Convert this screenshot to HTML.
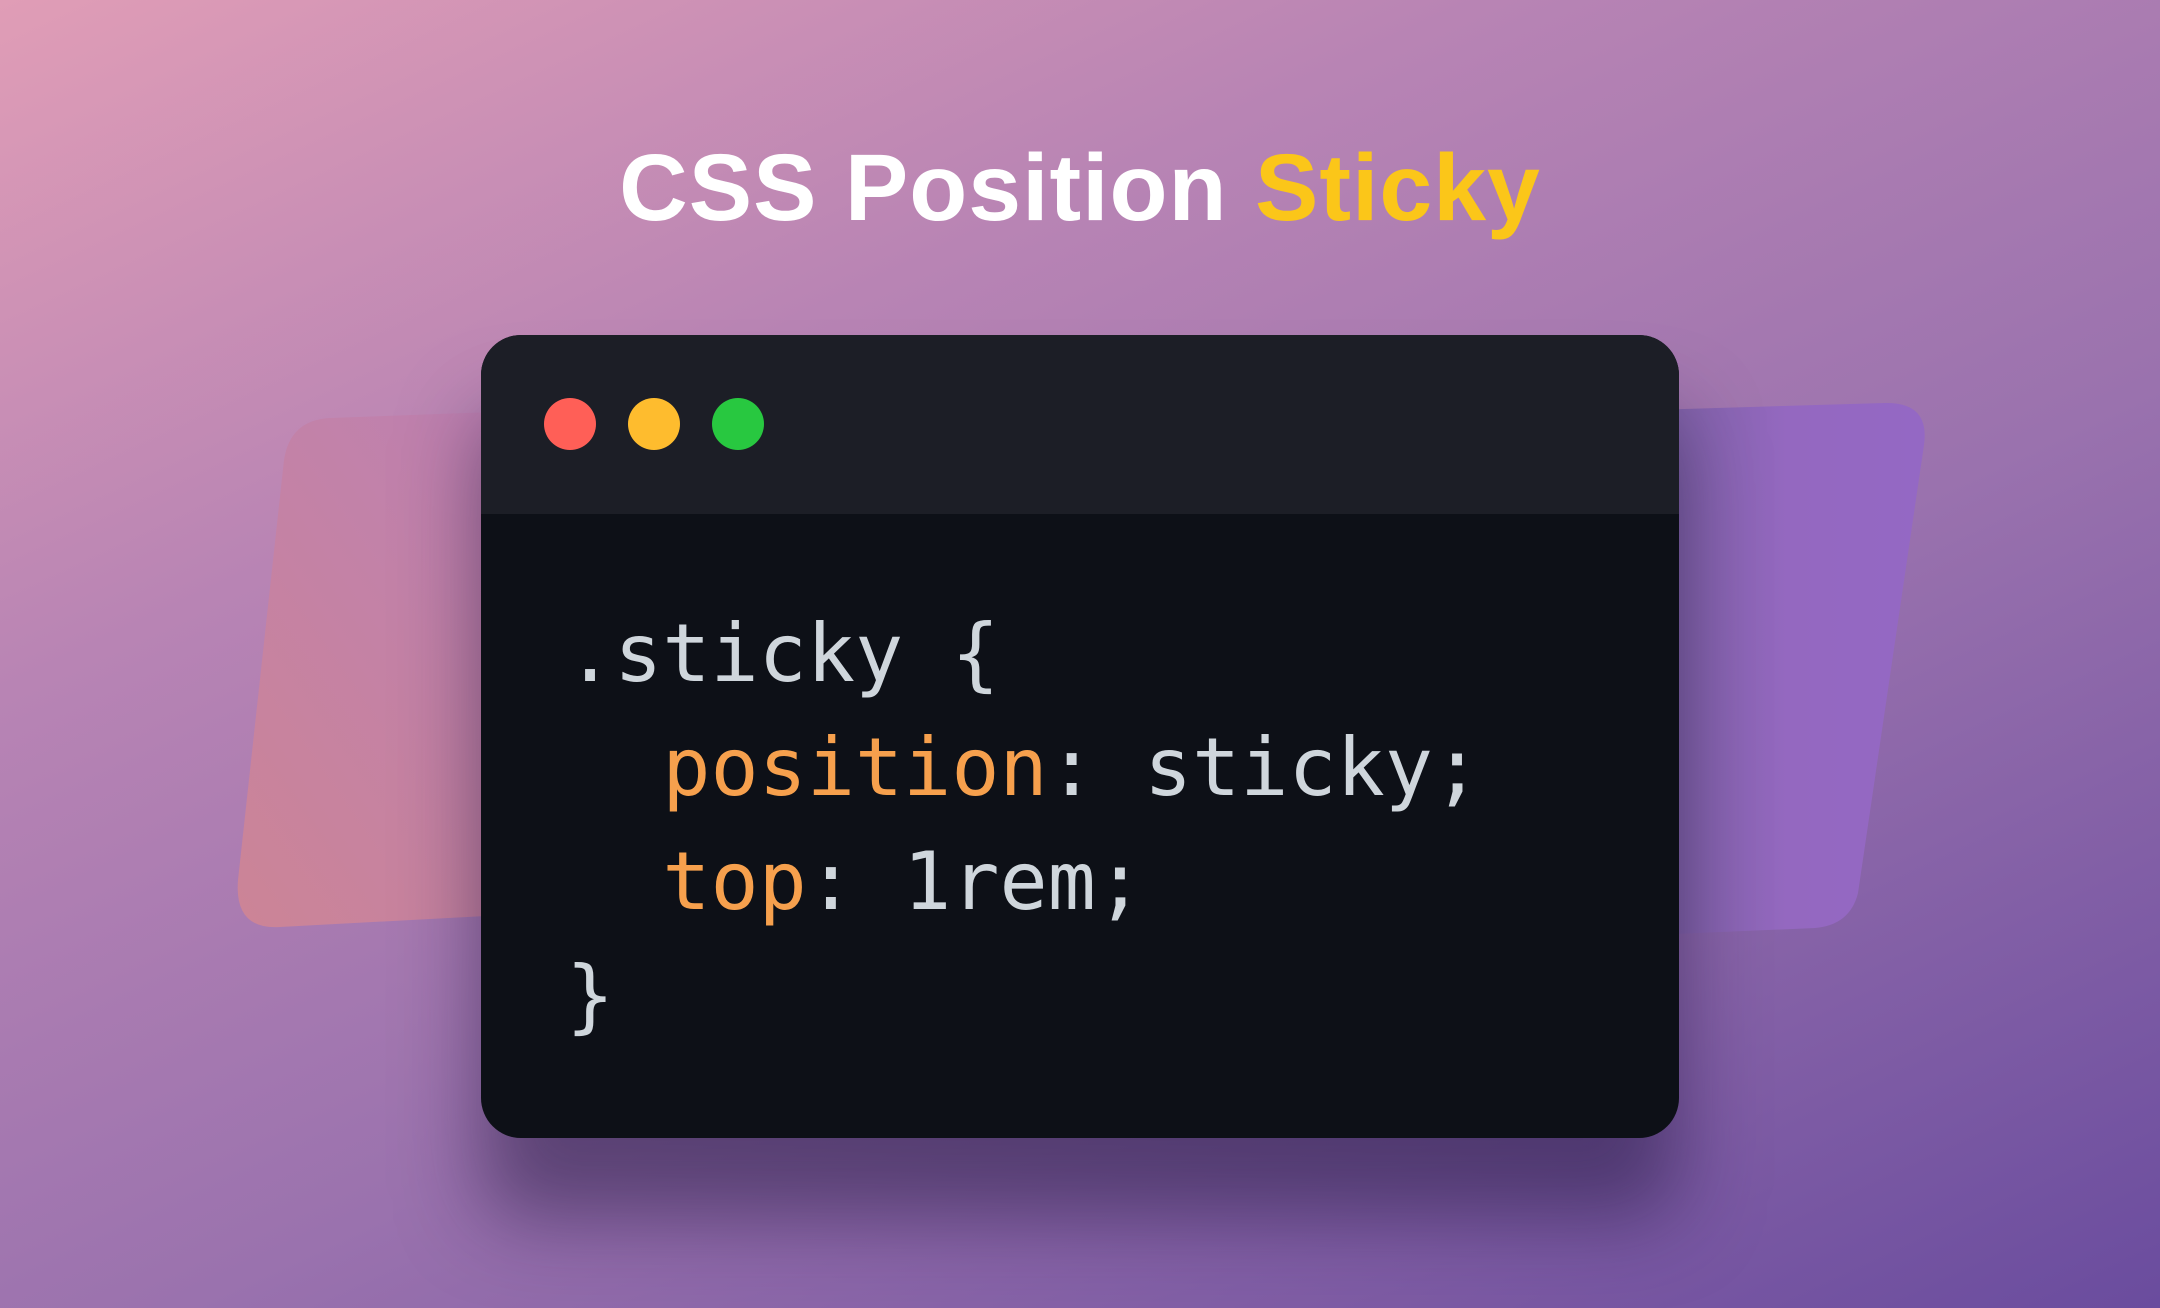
<!DOCTYPE html>
<html><head><meta charset="utf-8"><style>
html,body{margin:0;padding:0}
body{width:2160px;height:1308px;overflow:hidden;position:relative;background:linear-gradient(155deg,#e09db6 0%,#b884b4 30%,#9a72ae 60%,#6a4c9e 100%);font-family:"Liberation Sans",sans-serif}
h1{position:absolute;top:128px;left:0;width:2160px;text-align:center;margin:0;font-size:95px;font-weight:bold;color:#fff;line-height:120px;letter-spacing:1px}
h1 span{color:#fbc619}
.card{position:absolute;left:481px;top:335px;width:1198px;height:803px;border-radius:40px;overflow:hidden;background:#0d1017;box-shadow:0 80px 80px rgba(30,20,60,.5)}
.hd{height:179px;background:#1c1e26;position:relative}
.dot{position:absolute;top:398px;width:52px;height:52px;border-radius:50%}
pre{position:absolute;left:85px;top:262px;margin:0;font-family:"DejaVu Sans Mono","Liberation Mono",monospace;font-size:80px;line-height:114px;color:#cfd6dc}
.o{color:#f6a04d}
</style></head><body>
<svg width="2160" height="1308" style="position:absolute;left:0;top:0">
<defs>
<linearGradient id="lg" x1="0" y1="1" x2="1" y2="0"><stop offset="0" stop-color="#cc8496"/><stop offset="1" stop-color="#bb80b6"/></linearGradient>
<linearGradient id="rg" x1="0" y1="0" x2="1" y2="0"><stop offset="0" stop-color="#7e62a4"/><stop offset=".5" stop-color="#9468c0"/><stop offset="1" stop-color="#9468c4"/></linearGradient>
</defs>
<path d="M330 418 L600 408 L560 912 L280 927 Q234 930 238 880 L284 460 Q290 420 330 418 Z" fill="url(#lg)"/>
<path d="M1650 410 L1885 403 Q1930 402 1924 445 L1858 893 Q1850 925 1815 928 L1650 935 Z" fill="url(#rg)"/>
</svg>
<h1>CSS Position <span>Sticky</span></h1>
<div class="card"><div class="hd"></div>
<pre>.sticky {
  <span class="o">position</span>: sticky;
  <span class="o">top</span>: 1rem;
}</pre></div>
<div class="dot" style="left:544px;background:#ff5f57"></div>
<div class="dot" style="left:628px;background:#febc2e"></div>
<div class="dot" style="left:712px;background:#28c840"></div>
</body></html>
